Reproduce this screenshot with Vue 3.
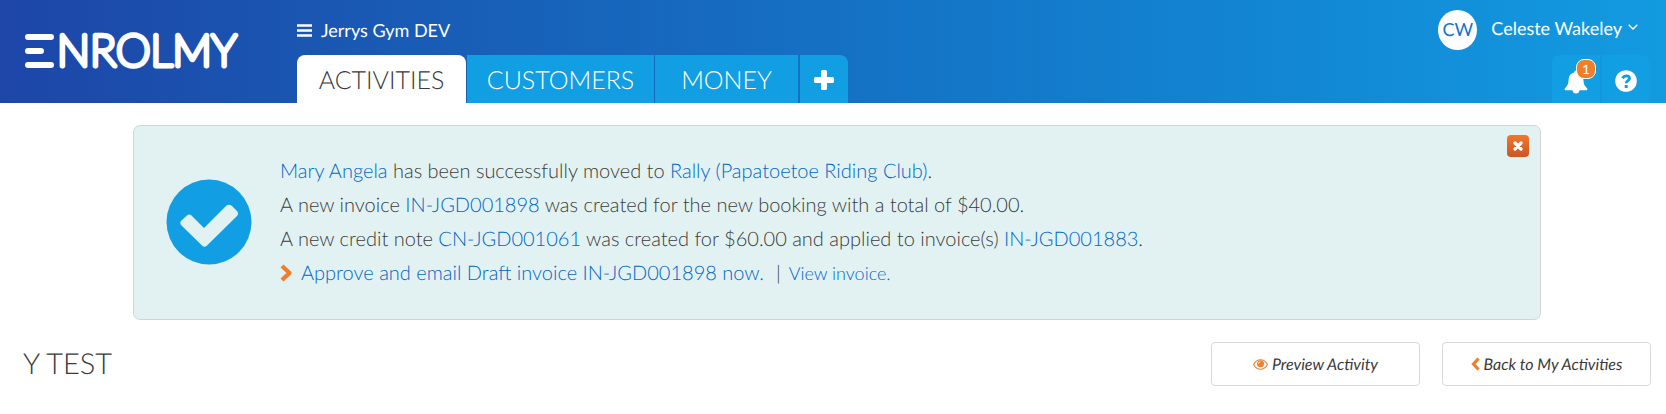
<script setup>
const tabs = [
  { label: 'ACTIVITIES', cls: 'activities active' },
  { label: 'CUSTOMERS', cls: 'customers' },
  { label: 'MONEY', cls: 'money' },
]
</script>

<template>
  <div class="page">
    <header class="topbar">
      <a class="logo" href="#" aria-label="Enrolmy">
        <svg width="240" height="64" viewBox="0 0 240 64">
          <path d="M5 18h23M5 32h13M5 46h23" fill="none" stroke="#fff" stroke-width="6" stroke-linecap="round" />
          <text class="wordmark" x="34" y="47">NROLMY</text>
        </svg>
      </a>
      <div class="main">
        <button class="org" type="button">
          <svg width="15" height="13" viewBox="0 0 15 13"><path d="M0 1.500h15M0 6.500h15M0 11.500h15" stroke="#fff" stroke-width="2.400" /></svg>
          <span>Jerrys Gym DEV</span>
        </button>
        <nav class="tabs">
          <a v-for="t in tabs" :key="t.label" href="#" class="tab" :class="t.cls">{{ t.label }}</a>
          <button class="tab add" type="button" aria-label="Add">
            <svg width="20" height="20" viewBox="0 0 20 20"><path d="M8.500 0h3q1.500 0 1.500 1.500v5.500h5.500q1.500 0 1.500 1.500v3q0 1.500-1.500 1.500h-5.500v5.500q0 1.500-1.500 1.500h-3q-1.500 0-1.500-1.500v-5.500h-5.500q-1.500 0-1.500-1.500v-3q0-1.500 1.500-1.500h5.500v-5.500q0-1.500 1.500-1.500z" fill="#fff" /></svg>
          </button>
        </nav>
      </div>
      <div class="side">
        <button class="user" type="button">
          <span class="avatar">CW</span>
          <span class="name">Celeste Wakeley</span>
          <svg class="caret" width="10" height="6" viewBox="0 0 10 6"><path d="M.7.7 5 5 9.300.7" fill="none" stroke="#fff" stroke-width="1.300" /></svg>
        </button>
        <div class="tools">
          <button class="tool" type="button" aria-label="Notifications">
            <svg width="24" height="25" viewBox="0 0 24 25"><path d="M12 1.500C10.800 1.500 10.300 2.300 10.300 3.400 6.500 4.200 4.800 7 4.600 10.500 4.400 15 3.500 17 .8 19.300Q0 21 1.500 21.300H8.500Q9 24.500 12 24.500T15.500 21.300H22.500Q24 21 23.200 19.300C20.500 17 19.600 15 19.400 10.500 19.200 7 17.500 4.200 13.700 3.400 13.700 2.300 13.200 1.500 12 1.500Z" fill="#fff" /></svg>
            <span class="badge">1</span>
          </button>
          <button class="tool help" type="button" aria-label="Help">
            <svg width="22" height="22" viewBox="0 0 22 22"><circle cx="11" cy="11" r="10.800" fill="#fff" /><path d="M7.600 8.300C8.600 6.300 9.700 5.800 11.300 5.800 13.200 5.800 14.500 7 14.500 8.400 14.500 10.700 11.200 10.600 11.200 13.300" fill="none" stroke="#129ee2" stroke-width="2.800" /><path d="M9.700 15h3v3h-3z" fill="#129ee2" /></svg>
          </button>
        </div>
      </div>
    </header>

    <section class="alert" role="status">
      <svg width="86" height="86" viewBox="0 0 86 86"><circle cx="43" cy="43" r="42.500" fill="#129ee2" /><path d="M15.500 41.500 21 36.500Q23.500 34.500 26 37L38 49 60 27Q63 24.500 66 27L71 32Q73 34.500 71 37L41 66.500Q38.500 69 36 66.500L15.500 46.500Q13 44 15.500 41.500Z" fill="#e2f2f3" /></svg>
      <div class="messages">
        <p><a href="#">Mary Angela</a> has been successfully moved to <a href="#">Rally (Papatoetoe Riding Club)</a>.</p>
        <p>A new invoice <a href="#">IN-JGD001898</a> was created for the new booking with a total of $40.00.</p>
        <p>A new credit note <a href="#">CN-JGD001061</a> was created for $60.00 and applied to invoice(s) <a href="#">IN-JGD001883</a>.</p>
        <p class="actions">
          <svg width="13" height="18" viewBox="0 0 13 18"><path d="M2 2 9.500 9 2 16" fill="none" stroke="#f07f2d" stroke-width="4.400" stroke-linejoin="round" /></svg>
          <a href="#">Approve and email Draft invoice IN-JGD001898 now.</a>
          <span class="bar">|</span>
          <a class="small" href="#">View invoice.</a>
        </p>
      </div>
      <button class="close" type="button" aria-label="Close">
        <svg width="10" height="10" viewBox="0 0 10 10"><path d="M2 2 8 8M8 2 2 8" stroke="#fff" stroke-width="3.200" stroke-linecap="round" /></svg>
      </button>
    </section>

    <div class="heading">
      <h1>Y TEST</h1>
      <a class="btn" href="#">
        <svg width="15" height="11" viewBox="0 0 15 11"><path d="M.6 5.500C4-.8 11-.8 14.400 5.500 11 11.800 4 11.800.6 5.500Z" fill="none" stroke="#f07f2d" stroke-width="1.100" /><circle cx="7.500" cy="4.800" r="3.500" fill="#f07f2d" /><path d="M5.500 4.800Q5.500 2.800 7.500 2.800" fill="none" stroke="#fff" stroke-width=".8" /></svg>
        <span>Preview Activity</span>
      </a>
      <a class="btn" href="#">
        <svg width="9" height="14" viewBox="0 0 9 14"><path d="M7.500 1.500 2.500 7 7.500 12.500" fill="none" stroke="#f07f2d" stroke-width="3.200" /></svg>
        <span>Back to My Activities</span>
      </a>
    </div>
  </div>
</template>

<style>
body {
  margin: 0;
  background: #fff;
}
</style>

<style scoped>
.page {
  font-family: Lato, "Open Sans", sans-serif;
  text-rendering: geometricPrecision;
  color: #3a3a3a;
}
a {
  text-decoration: none;
  color: #0067c5;
}
button {
  font-family: inherit;
  text-rendering: inherit;
  border: 0;
  padding: 0;
  background: none;
  cursor: pointer;
}
svg {
  display: block;
  flex: none;
}
.topbar {
  display: flex;
  align-items: stretch;
  height: 103px;
  background: linear-gradient(90deg, #1d46a8 0%, #1764bb 35%, #1285d2 75%, #129be0 100%);
}
.logo {
  box-sizing: border-box;
  padding: 19px 0 0 23px;
  width: 297px;
}
.wordmark {
  font-family: Lato, sans-serif;
  font-size: 44px;
  font-weight: 100;
  fill: #fff;
  stroke: #fff;
  stroke-width: 5px;
  stroke-linejoin: round;
}
.main {
  display: flex;
  flex-direction: column;
  justify-content: space-between;
}
.org {
  display: flex;
  align-items: center;
  gap: 9px;
  height: 24px;
  margin-top: 18px;
  color: #fff;
  font-size: 18px;
}
.tabs {
  display: flex;
  gap: 1px;
  height: 48px;
}
.tab {
  box-sizing: border-box;
  display: flex;
  align-items: center;
  justify-content: center;
  padding-top: 2px;
  background: #129ee2;
  color: #fff;
  font-size: 25px;
  font-weight: 300;
}
.activities {
  width: 169px;
}
.customers {
  width: 187px;
}
.money {
  width: 143px;
}
.active {
  background: #fff;
  color: #3a3a3a;
  border-radius: 8px 8px 0 0;
}
.add {
  width: 48px;
  margin-left: 1px;
  border-radius: 0 8px 0 0;
}
.side {
  display: flex;
  flex-direction: column;
  justify-content: space-between;
  align-items: flex-end;
  margin-left: auto;
  padding-right: 16px;
}
.user {
  display: flex;
  align-items: center;
  height: 40px;
  margin: 10px 12px 0 0;
  color: #fff;
  font-size: 18px;
}
.avatar {
  width: 39px;
  height: 40px;
  line-height: 38px;
  margin-right: 14px;
  border-radius: 50%;
  background: #fff;
  color: #1573c8;
}
.name {
  line-height: 36px;
  padding-bottom: 4px;
}
.caret {
  margin: 0 0 6px 6px;
}
.tools {
  display: flex;
  gap: 2px;
}
.tool {
  position: relative;
  box-sizing: border-box;
  display: flex;
  align-items: center;
  justify-content: center;
  width: 48px;
  height: 48px;
  padding-top: 4px;
  border-radius: 8px 0 0 0;
  background: #129ee2;
}
.tool.help {
  border-radius: 0 8px 0 0;
}
.badge {
  position: absolute;
  top: 4px;
  right: 4px;
  box-sizing: border-box;
  width: 20px;
  height: 20px;
  border: 1px solid #fff;
  border-radius: 8px;
  background: #f07f2d;
  color: #fff;
  font-size: 13px;
  line-height: 19px;
}
.alert {
  position: relative;
  display: flex;
  align-items: center;
  gap: 28px;
  margin: 22px 125px 0 133px;
  padding: 28px 32px 29px;
  border: 1px solid #d0d6d8;
  border-radius: 7px;
  background: #e2f2f3;
}
.messages {
  font-size: 20px;
  font-weight: 300;
  line-height: 34px;
}
.messages p {
  margin: 0;
}
.actions {
  display: flex;
  align-items: center;
}
.actions svg {
  margin-right: 8px;
}
.bar {
  margin: 0 8px 0 12px;
}
.small {
  font-size: 18px;
}
.close {
  position: absolute;
  top: 9px;
  right: 11px;
  display: flex;
  align-items: center;
  justify-content: center;
  width: 22px;
  height: 22px;
  border-radius: 4px;
  background: linear-gradient(#f0782a, #cc5529);
}
.heading {
  display: flex;
  align-items: center;
  gap: 22px;
  padding: 22px 15px 0 23px;
}
h1 {
  flex: 1;
  margin: 0;
  font-size: 29px;
  font-weight: 300;
  line-height: 44px;
}
.btn {
  box-sizing: border-box;
  display: flex;
  align-items: center;
  justify-content: center;
  gap: 4px;
  width: 209px;
  height: 44px;
  border: 1px solid #d8d8d8;
  border-radius: 4px;
  color: #3a3a3a;
  font-size: 16px;
  font-style: italic;
}
</style>
